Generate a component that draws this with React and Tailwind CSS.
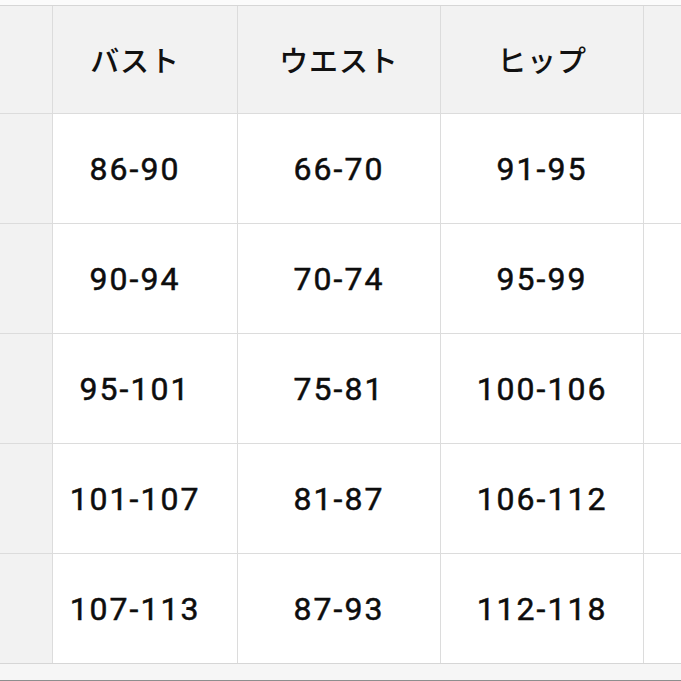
/**
 * SizeChart - cropped body measurement table (cm)
 * Grey header row + grey row-label column, white data cells, hairline grid.
 */

const HEADERS = ["", "バスト", "ウエスト", "ヒップ", "肩幅"];

const ROWS = [
  ["S", "86-90", "66-70", "91-95", "37"],
  ["M", "90-94", "70-74", "95-99", "38"],
  ["L", "95-101", "75-81", "100-106", "39"],
  ["XL", "101-107", "81-87", "106-112", "40"],
  ["2XL", "107-113", "87-93", "112-118", "41"],
];

const JP = { fontFamily: '"Noto Sans CJK JP", "Noto Sans", sans-serif' };
const NUM = { fontFamily: 'Roboto, "Liberation Sans", Arial, sans-serif' };

export default function App() {
  return (
    <div className="w-[681px] h-[681px] overflow-hidden bg-white flex flex-col">
      {/* top margin above the table */}
      <div className="h-[5px] shrink-0 bg-[#fbfbfb]" />

      <div className="w-[900px] shrink-0 grid grid-cols-[52px_184px_202px_202px_203px] grid-rows-[107px_repeat(5,109px)] gap-px bg-[#dcdcdc] border-y border-[#d6d6d6]">
        {HEADERS.map((h, i) => (
          <div
            key={`h${i}`}
            style={JP}
            className={`bg-[#f2f2f2] flex items-center justify-center text-[29px] font-medium tracking-[0.03em] text-[#111] ${
              i === 1 ? "pr-[20px]" : ""
            }`}
          >
            {h && <span className={i === 0 ? "hidden" : ""}>{h}</span>}
          </div>
        ))}

        {ROWS.map((row, r) =>
          row.map((cell, c) => (
            <div
              key={`${r}-${c}`}
              style={NUM}
              className={`flex items-center justify-center text-[32px] font-normal tracking-[2px] text-[#0d0d0d] [-webkit-text-stroke:0.5px_#0d0d0d] ${
                c === 0 ? "bg-[#f2f2f2]" : "bg-white"
              } ${c === 1 ? "pr-[20px]" : ""}`}
            >
              {c === 0 ? <span className="hidden">{cell}</span> : cell}
            </div>
          ))
        )}
      </div>

      {/* strip below the table */}
      <div className="h-[16px] shrink-0 bg-[#f6f6f6]" />
      <div className="h-[2px] shrink-0 bg-[#8e8e8e]" />
    </div>
  );
}
